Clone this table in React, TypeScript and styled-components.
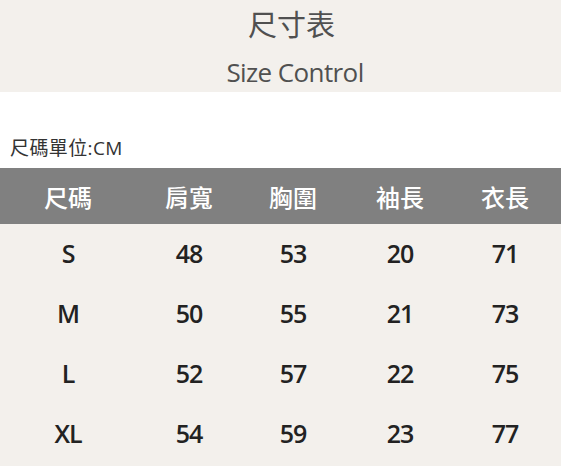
import React from "react";
import styled, { createGlobalStyle } from "styled-components";

const GlobalStyle = createGlobalStyle`
  html, body {
    margin: 0;
    padding: 0;
    background: #f3f0ec;
  }
  body {
    font-family: "Open Sans", "Noto Sans CJK TC", sans-serif;
  }
`;

const Page = styled.div`
  width: 561px;
  height: 466px;
  overflow: hidden;
  display: flex;
  flex-direction: column;
`;

const Banner = styled.div`
  height: 92px;
  background: #f3f0ec;
  display: flex;
  flex-direction: column;
  align-items: center;
  color: #505050;
`;

const Title = styled.div`
  font-size: 29px;
  line-height: 29px;
  margin-top: 10px;
  margin-left: 22px;
`;

const Subtitle = styled.div`
  font-size: 26px;
  line-height: 26px;
  margin-top: 20px;
  margin-left: 29px;
  letter-spacing: -0.6px;
`;

const UnitBar = styled.div`
  height: 76px;
  background: #fff;
  display: flex;
  align-items: flex-end;
  padding: 0 0 7px 10px;
  box-sizing: border-box;
  font-size: 19px;
  color: #333;
  letter-spacing: 0.4px;
`;

const cols = "136px 106px 102px 112px 98px";

const HeadRow = styled.div`
  height: 56px;
  background: #808080;
  display: grid;
  grid-template-columns: ${cols};
  align-items: center;
  color: #fff;
  font-size: 24px;
  font-weight: 500;
`;

const Row = styled.div`
  height: 60px;
  padding-bottom: 2px;
  box-sizing: border-box;
  display: grid;
  grid-template-columns: ${cols};
  align-items: center;
  color: #222;
  font-size: 25px;
  font-weight: 600;
  letter-spacing: -1px;
`;

const Cell = styled.div`
  text-align: center;
`;

const headers = ["尺碼", "肩寬", "胸圍", "袖長", "衣長"];
const rows = [
  ["S", "48", "53", "20", "71"],
  ["M", "50", "55", "21", "73"],
  ["L", "52", "57", "22", "75"],
  ["XL", "54", "59", "23", "77"],
];

export default function App() {
  return (
    <>
      <GlobalStyle />
      <Page>
        <Banner>
          <Title>尺寸表</Title>
          <Subtitle>Size Control</Subtitle>
        </Banner>
        <UnitBar>尺碼單位:CM</UnitBar>
        <HeadRow>
          {headers.map((h) => (
            <Cell key={h}>{h}</Cell>
          ))}
        </HeadRow>
        {rows.map((r) => (
          <Row key={r[0]}>
            {r.map((c, i) => (
              <Cell key={i}>{c}</Cell>
            ))}
          </Row>
        ))}
      </Page>
    </>
  );
}
